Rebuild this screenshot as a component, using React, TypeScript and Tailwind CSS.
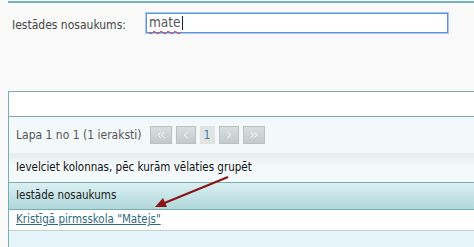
import { ChevronLeft, ChevronRight, ChevronsLeft, ChevronsRight } from "lucide-react";

const fonts = "font-['DejaVu_Sans_Condensed','Liberation_Sans',sans-serif]";

function PagerButton({ children, wide = false }: { children: React.ReactNode; wide?: boolean }) {
  return (
    <span
      className={`grid h-[18px] place-items-center border border-[#b9c1c2] bg-gradient-to-b from-[#d9dfe0] to-[#c2cacb] text-white ${
        wide ? "w-[22px]" : "w-[20px]"
      }`}
    >
      {children}
    </span>
  );
}

export default function App() {
  return (
    <div className={`relative h-[247px] w-[474px] overflow-hidden bg-[#f9f9f9] text-[12px] ${fonts}`}>
      <div className="ml-[8px] mt-px h-[2px] bg-[#74b2b9]" />

      {/* meklēšanas forma */}
      <div className="flex items-start pt-[10px]">
        <label className="ml-[12px] mt-[3px] w-[134px] text-[#444]">Iestādes nosaukums:</label>
        <div className="flex h-[20px] w-[302px] items-center border border-[#5b92df] bg-white pl-[2px] shadow-[0_0_0_1px_#a9c7f2]">
          <span className="text-[13.5px] leading-none text-[#555] underline decoration-wavy decoration-[#e03030] decoration-1 underline-offset-[3px]">
            mate
          </span>
          <span className="ml-px h-[14px] w-px bg-[#222]" />
        </div>
      </div>

      {/* saraksta panelis */}
      <div className="ml-[8px] mt-[57px] w-[480px] border-l border-t border-[#78aeb3]">
        <div className="h-[25px] border-b border-[#78aeb3] bg-white" />

        <div className="flex h-[36px] items-center gap-[8px] bg-[#f3f8fb] pl-[7px] text-[#555]">
          <span>Lapa 1 no 1 (1 ieraksti)</span>
          <div className="flex items-center gap-[4px]">
            <PagerButton wide>
              <ChevronsLeft size={12} strokeWidth={2} />
            </PagerButton>
            <PagerButton>
              <ChevronLeft size={12} strokeWidth={2} />
            </PagerButton>
            <span className="grid h-[18px] w-[15px] place-items-center bg-[#e2e4e4] text-[#3c7fa3]">1</span>
            <PagerButton>
              <ChevronRight size={12} strokeWidth={2} />
            </PagerButton>
            <PagerButton wide>
              <ChevronsRight size={12} strokeWidth={2} />
            </PagerButton>
          </div>
        </div>

        <div className="flex h-[30px] items-end border-b border-[#78aeb3] bg-[linear-gradient(#e8eced,#f4f9fc_14px,#f4f9fc)] pb-[6px] pl-[7px] text-[11.5px] text-[#111]">
          Ievelciet kolonnas, pēc kurām vēlaties grupēt
        </div>

        <div className="flex h-[27px] items-center border-b border-[#78aeb3] bg-gradient-to-b from-[#dcf0f2] to-[#b0d7db] pl-[7px] text-[11.5px] text-[#222]">
          Iestāde nosaukums
        </div>

        <div className="flex h-[21px] items-center border-b border-[#c4ced2] bg-white pl-[7px] text-[11.5px]">
          <a className="text-[#2c6a80] underline">Kristīgā pirmsskola "Matejs"</a>
        </div>

        <div className="h-[40px] bg-[#e6f5f9]" />
      </div>

      {/* bultiņa */}
      <svg className="absolute left-0 top-0" width="474" height="247" viewBox="0 0 474 247">
        <line x1="228" y1="177" x2="162" y2="204" stroke="#8a1414" strokeWidth="2" />
        <polygon points="155,207 163,198 167,207" fill="#8a1414" />
      </svg>
    </div>
  );
}
